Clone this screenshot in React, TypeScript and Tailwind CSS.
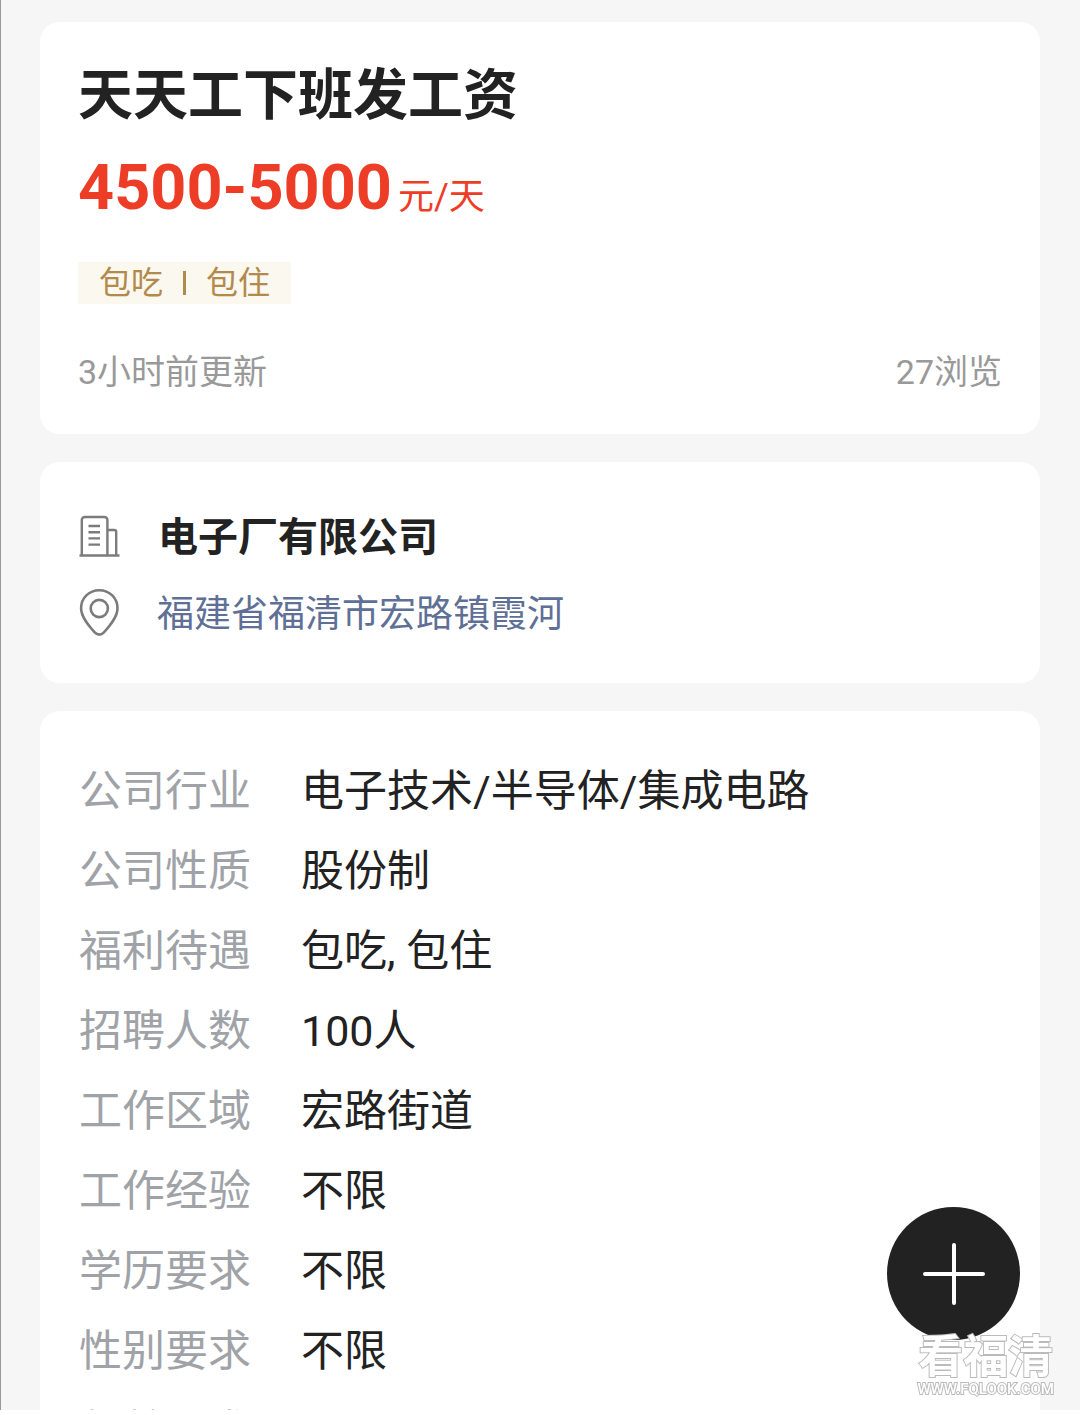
const details = [
  { label: "公司行业", value: "电子技术/半导体/集成电路" },
  { label: "公司性质", value: "股份制" },
  { label: "福利待遇", value: "包吃, 包住" },
  { label: "招聘人数", value: "100人" },
  { label: "工作区域", value: "宏路街道" },
  { label: "工作经验", value: "不限" },
  { label: "学历要求", value: "不限" },
  { label: "性别要求", value: "不限" },
];

function BuildingIcon() {
  return (
    <svg viewBox="0 2 40 48" className="h-12 w-10 shrink-0 overflow-visible" fill="none" stroke="#7b7b7b" strokeWidth="2.4">
      <path d="M2.8 43V8a3 3 0 0 1 3-3h19.6a3 3 0 0 1 3 3v35" />
      <path d="M28.4 18h6.8a2 2 0 0 1 2 2v23" />
      <path d="M.5 43.5h40" />
      <path d="M9.5 14H21M9.5 20.2H21M9.5 26.4H21M9.5 32.6H21" />
    </svg>
  );
}

function PinIcon() {
  return (
    <svg viewBox="0 3 40 48" className="h-12 w-10 shrink-0 overflow-visible" fill="none" stroke="#7b7b7b" strokeWidth="2.6">
      <path d="M20.3 2.2C10 2.2 2.1 10.2 2.1 20.2c0 9 8 18 13.6 24.200 2.800 3 6.400 3 9.200 0C30.500 38.200 38.500 29.200 38.500 20.200c0-10-7.900-18-18.200-18z" />
      <circle cx="20.3" cy="20.5" r="8.6" />
    </svg>
  );
}

function JobCard() {
  return (
    <section className="rounded-[20px] bg-white p-[38px]">
      <h1 className="text-[55px]/[70px] font-bold">天天工下班发工资</h1>
      <p className="mt-5 flex items-baseline gap-1.5 text-[#ee3d26]">
        <span className="text-[63px]/[76px] font-bold">4500-5000</span>
        <span className="text-[36px]/[48px]">元/天</span>
      </p>
      <div className="mt-9 flex">
        <div className="flex h-[42px] items-center gap-5 bg-[#fbf8ef] px-[21px] text-[32px]/[42px] text-[#b18a4c]">
          <span>包吃</span>
          <span className="h-6 w-[3px] bg-[#b18a4c]" />
          <span>包住</span>
        </div>
      </div>
      <div className="mt-11 flex justify-between text-[34px]/[48px] text-[#999]">
        <span>3小时前更新</span>
        <span>27浏览</span>
      </div>
    </section>
  );
}

function CompanyCard() {
  return (
    <section className="rounded-[20px] bg-white px-[39px] pt-[50px] pb-[42px]">
      <div className="flex items-center gap-[39px]">
        <BuildingIcon />
        <h2 className="text-[40px]/[52px] font-bold">电子厂有限公司</h2>
      </div>
      <div className="mt-[25px] flex items-center gap-[38px]">
        <PinIcon />
        <a href="#map" className="text-[37px]/[52px] text-[#5f7096]">
          福建省福清市宏路镇霞河
        </a>
      </div>
    </section>
  );
}

function DetailCard() {
  return (
    <section className="overflow-hidden rounded-t-[20px] bg-white px-[39px] pt-10">
      <dl className="text-[43px]/[80px]">
        {details.map((item) => (
          <div key={item.label} className="flex">
            <dt className="w-[222px] shrink-0 text-[#9fa3a8]">{item.label}</dt>
            <dd>{item.value}</dd>
          </div>
        ))}
        <div className="h-[19px] overflow-hidden">
          <dt className="text-[#9fa3a8]">年龄要求</dt>
        </div>
      </dl>
    </section>
  );
}

export default function App() {
  return (
    <div className="bg-white font-['Roboto','Noto_Sans_CJK_SC',sans-serif] text-[#222]" lang="zh-CN">
      <main className="flex flex-col gap-7 border-l border-[#999] bg-[#f6f6f6] pt-[22px] pr-10 pl-[39px]">
        <JobCard />
        <CompanyCard />
        <DetailCard />
      </main>

      <button
        type="button"
        aria-label="发布"
        className="fixed right-[60px] bottom-[75px] flex size-[133px] items-center justify-center rounded-full bg-[#222]"
      >
        <svg viewBox="0 0 62 62" className="size-[62px]" stroke="#fff" strokeWidth="4" strokeLinecap="round">
          <path d="M31 2v58M2 31h58" />
        </svg>
      </button>

      <div className="fixed right-[26px] bottom-[18px] text-center text-white [-webkit-text-stroke:2px_#bbb] [paint-order:stroke]">
        <div className="text-[45px]/[46px] font-bold">看福清</div>
        <div className="text-[15px]/[16px] font-medium">WWW.FQLOOK.COM</div>
      </div>
    </div>
  );
}
